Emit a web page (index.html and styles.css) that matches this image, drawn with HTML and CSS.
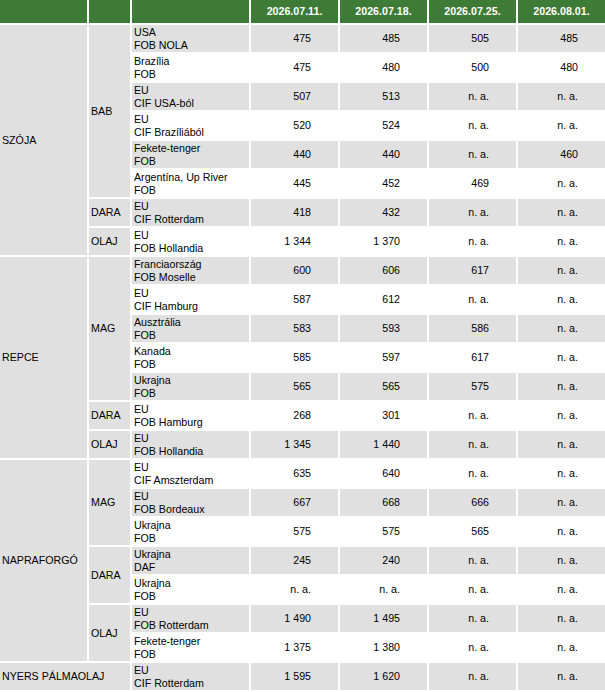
FILE: index.html
```html
<!DOCTYPE html>
<html lang="hu">
<head>
<meta charset="utf-8">
<title>Árak</title>
<link rel="stylesheet" href="styles.css">
</head>
<body>
<div class="wrap">
<table class="prices">
<colgroup>
<col class="c-prod"><col class="c-type"><col class="c-orig"><col class="c-val"><col class="c-val"><col class="c-val"><col class="c-val">
</colgroup>
<thead>
<tr><th></th><th></th><th></th><th>2026.07.11.</th><th>2026.07.18.</th><th>2026.07.25.</th><th>2026.08.01.</th></tr>
</thead>
<tbody>
<tr class="even"><td class="grp" rowspan="8">SZÓJA</td><td class="grp" rowspan="6">BAB</td><td class="orig">USA<br>FOB NOLA</td><td>475</td><td>485</td><td>505</td><td>485</td></tr>
<tr class="odd"><td class="orig">Brazília<br>FOB</td><td>475</td><td>480</td><td>500</td><td>480</td></tr>
<tr class="even"><td class="orig">EU<br>CIF USA-ból</td><td>507</td><td>513</td><td>n. a.</td><td>n. a.</td></tr>
<tr class="odd"><td class="orig">EU<br>CIF Brazíliából</td><td>520</td><td>524</td><td>n. a.</td><td>n. a.</td></tr>
<tr class="even"><td class="orig">Fekete-tenger<br>FOB</td><td>440</td><td>440</td><td>n. a.</td><td>460</td></tr>
<tr class="odd"><td class="orig">Argentína, Up River<br>FOB</td><td>445</td><td>452</td><td>469</td><td>n. a.</td></tr>
<tr class="even"><td class="grp">DARA</td><td class="orig">EU<br>CIF Rotterdam</td><td>418</td><td>432</td><td>n. a.</td><td>n. a.</td></tr>
<tr class="odd"><td class="grp">OLAJ</td><td class="orig">EU<br>FOB Hollandia</td><td>1 344</td><td>1 370</td><td>n. a.</td><td>n. a.</td></tr>
<tr class="even"><td class="grp" rowspan="7">REPCE</td><td class="grp" rowspan="5">MAG</td><td class="orig">Franciaország<br>FOB Moselle</td><td>600</td><td>606</td><td>617</td><td>n. a.</td></tr>
<tr class="odd"><td class="orig">EU<br>CIF Hamburg</td><td>587</td><td>612</td><td>n. a.</td><td>n. a.</td></tr>
<tr class="even"><td class="orig">Ausztrália<br>FOB</td><td>583</td><td>593</td><td>586</td><td>n. a.</td></tr>
<tr class="odd"><td class="orig">Kanada<br>FOB</td><td>585</td><td>597</td><td>617</td><td>n. a.</td></tr>
<tr class="even"><td class="orig">Ukrajna<br>FOB</td><td>565</td><td>565</td><td>575</td><td>n. a.</td></tr>
<tr class="odd"><td class="grp">DARA</td><td class="orig">EU<br>FOB Hamburg</td><td>268</td><td>301</td><td>n. a.</td><td>n. a.</td></tr>
<tr class="even"><td class="grp">OLAJ</td><td class="orig">EU<br>FOB Hollandia</td><td>1 345</td><td>1 440</td><td>n. a.</td><td>n. a.</td></tr>
<tr class="odd"><td class="grp" rowspan="7">NAPRAFORGÓ</td><td class="grp" rowspan="3">MAG</td><td class="orig">EU<br>CIF Amszterdam</td><td>635</td><td>640</td><td>n. a.</td><td>n. a.</td></tr>
<tr class="even"><td class="orig">EU<br>FOB Bordeaux</td><td>667</td><td>668</td><td>666</td><td>n. a.</td></tr>
<tr class="odd"><td class="orig">Ukrajna<br>FOB</td><td>575</td><td>575</td><td>565</td><td>n. a.</td></tr>
<tr class="even"><td class="grp" rowspan="2">DARA</td><td class="orig">Ukrajna<br>DAF</td><td>245</td><td>240</td><td>n. a.</td><td>n. a.</td></tr>
<tr class="odd"><td class="orig">Ukrajna<br>FOB</td><td>n. a.</td><td>n. a.</td><td>n. a.</td><td>n. a.</td></tr>
<tr class="even"><td class="grp" rowspan="2">OLAJ</td><td class="orig">EU<br>FOB Rotterdam</td><td>1 490</td><td>1 495</td><td>n. a.</td><td>n. a.</td></tr>
<tr class="odd"><td class="orig">Fekete-tenger<br>FOB</td><td>1 375</td><td>1 380</td><td>n. a.</td><td>n. a.</td></tr>
<tr class="even"><td class="grp" colspan="2">NYERS PÁLMAOLAJ</td><td class="orig">EU<br>CIF Rotterdam</td><td>1 595</td><td>1 620</td><td>n. a.</td><td>n. a.</td></tr>
</tbody>
</table>
</div>
</body>
</html>
```
FILE: styles.css
```css
html, body {
  margin: 0;
  padding: 0;
  background: #ffffff;
}

.wrap {
  width: 605px;
  overflow: hidden;
}

.prices {
  table-layout: fixed;
  width: 609px;
  margin: -2px;
  border-collapse: separate;
  border-spacing: 2px;
  font-family: "Liberation Sans", Arial, sans-serif;
  font-size: 10.667px;
  line-height: 12.5px;
  color: #000000;
}

.c-prod { width: 87px; }
.c-type { width: 41px; }
.c-orig { width: 117px; }
.c-val { width: 87px; }

.prices thead tr {
  height: 23px;
}

.prices th {
  background: #3e7b36;
  color: #ffffff;
  font-weight: bold;
  text-align: center;
  padding: 0;
  vertical-align: middle;
}

.prices tbody tr {
  height: 27px;
}

.prices td {
  padding: 1px 27px 1px 2px;
  text-align: right;
  vertical-align: middle;
  white-space: nowrap;
}

.prices td.grp,
.prices td.orig {
  text-align: left;
  padding: 1px 1px 1px 2px;
}

.prices td.grp {
  background: #e0e0e0;
}

.prices tr.even td {
  background: #e0e0e0;
}

.prices tr.odd td {
  background: #ffffff;
}

.prices tr.odd td.grp {
  background: #e0e0e0;
}
```
